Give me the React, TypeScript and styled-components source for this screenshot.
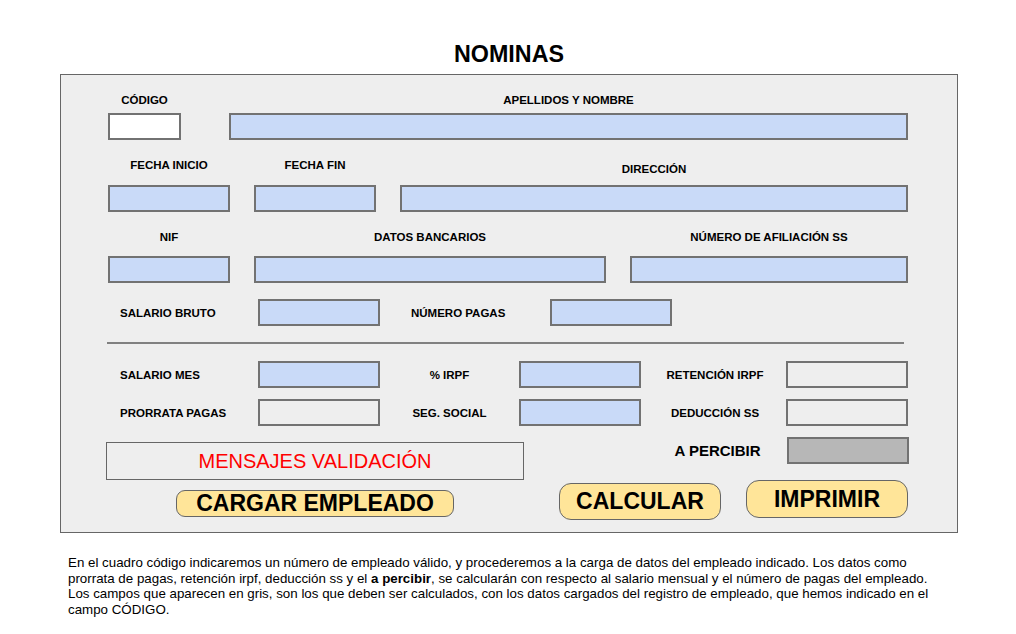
import styled, { createGlobalStyle } from "styled-components"

const GlobalStyle = createGlobalStyle`
  body {
    margin: 0;
    background: #fff;
    font-family: "Liberation Sans", Arial, sans-serif;
    color: #000;
  }
`

const Page = styled.div`
  width: 898px;
  margin-left: 60px;
  padding-top: 40px;
`

const Title = styled.h1`
  margin: 0 0 6px 0;
  font-size: 23.3px;
  line-height: 28px;
  font-weight: 700;
  text-align: center;
`

const Panel = styled.div`
  background: #eeeeee;
  border: 1px solid #666;
  padding: 0 0 12px 46px;
  box-sizing: border-box;
`

const StackRow = styled.div<{ $top: number }>`
  display: flex;
  gap: 24px;
  margin-top: ${({ $top }) => $top}px;
  margin-left: 1px;
`

const Field = styled.div<{ $w: number; $gap: number; $shift?: number }>`
  width: ${({ $w }) => $w}px;
  display: flex;
  flex-direction: column;
  align-items: center;
  gap: ${({ $gap }) => $gap}px;
  & > span {
    padding-top: ${({ $shift }) => $shift || 0}px;
    margin-bottom: ${({ $shift }) => -($shift || 0)}px;
  }
`

const Label = styled.span`
  font-size: 11.5px;
  line-height: 14px;
  font-weight: 700;
  white-space: nowrap;
`

const Box = styled.div<{ $kind?: "blue" | "white" | "empty" | "gray"; $w?: number }>`
  box-sizing: border-box;
  height: 27px;
  width: ${({ $w }) => ($w ? `${$w}px` : "100%")};
  border: 2px solid #727272;
  background: ${({ $kind }) =>
    $kind === "white" ? "#ffffff" : $kind === "empty" ? "transparent" : $kind === "gray" ? "#b7b7b7" : "#c9daf8"};
`

const InlineGrid = styled.div<{ $cols: string; $top: number }>`
  display: grid;
  grid-template-columns: ${({ $cols }) => $cols};
  align-items: center;
  margin-top: ${({ $top }) => $top}px;
  margin-left: 13px;
`

const SideLabel = styled(Label)<{ $center?: boolean; $pad?: number }>`
  text-align: ${({ $center }) => ($center ? "center" : "left")};
  padding-left: ${({ $pad }) => $pad || 0}px;
`

const Divider = styled.hr`
  width: 797px;
  margin: 16px 0 0 0;
  border: none;
  border-top: 2px solid #808080;
`

const Bottom = styled.div`
  display: flex;
  justify-content: space-between;
  margin-top: 11px;
  width: 802px;
`

const LeftCol = styled.div`
  display: flex;
  flex-direction: column;
  padding-top: 5px;
  margin-left: -1px;
`

const Messages = styled.div`
  box-sizing: border-box;
  width: 418px;
  height: 38px;
  border: 1px solid #666;
  display: flex;
  align-items: center;
  justify-content: center;
  color: #ff0000;
  font-size: 20px;
`

const RightCol = styled.div`
  display: flex;
  flex-direction: column;
  align-items: flex-end;
`

const PayRow = styled.div`
  display: flex;
  align-items: center;
`

const PayLabel = styled.span`
  width: 145px;
  text-align: center;
  font-size: 15px;
  font-weight: 700;
  padding-left: 6px;
  box-sizing: border-box;
`

const ButtonRow = styled.div`
  display: flex;
  align-items: flex-start;
  gap: 25px;
  margin-top: 16px;
  margin-right: 1px;
`

const ActionButton = styled.button<{ $w: number; $h: number; $top?: number; $left?: number }>`
  box-sizing: border-box;
  width: ${({ $w }) => $w}px;
  height: ${({ $h }) => $h}px;
  margin-top: ${({ $top }) => $top || 0}px;
  margin-left: ${({ $left }) => $left || 0}px;
  background: #ffe599;
  border: 1px solid #666;
  border-radius: ${({ $h }) => Math.round($h / 3)}px;
  font-family: "Liberation Sans", Arial, sans-serif;
  font-size: 23px;
  font-weight: 700;
  color: #000;
  padding: 0;
  display: flex;
  align-items: center;
  justify-content: center;
  line-height: 1;
`

const Note = styled.p`
  margin: 22px 0 0 8px;
  font-size: 13.33px;
  line-height: 15.5px;
  width: 890px;
`

export default function App() {
  return (
    <>
      <GlobalStyle />
      <Page>
        <Title>NOMINAS</Title>
        <Panel>
          <StackRow $top={18}>
            <Field $w={73} $gap={6}>
              <Label>CÓDIGO</Label>
              <Box $kind="white" />
            </Field>
            <Field $w={679} $gap={6} style={{ marginLeft: 24 }}>
              <Label>APELLIDOS Y NOMBRE</Label>
              <Box />
            </Field>
          </StackRow>

          <StackRow $top={18}>
            <Field $w={122} $gap={13}>
              <Label>FECHA INICIO</Label>
              <Box />
            </Field>
            <Field $w={122} $gap={13}>
              <Label>FECHA FIN</Label>
              <Box />
            </Field>
            <Field $w={508} $gap={13} $shift={4}>
              <Label>DIRECCIÓN</Label>
              <Box />
            </Field>
          </StackRow>

          <StackRow $top={18}>
            <Field $w={122} $gap={12}>
              <Label>NIF</Label>
              <Box />
            </Field>
            <Field $w={352} $gap={12}>
              <Label>DATOS BANCARIOS</Label>
              <Box />
            </Field>
            <Field $w={278} $gap={12}>
              <Label>NÚMERO DE AFILIACIÓN SS</Label>
              <Box />
            </Field>
          </StackRow>

          <InlineGrid $cols="138px 122px 170px 122px" $top={16}>
            <SideLabel>SALARIO BRUTO</SideLabel>
            <Box />
            <SideLabel $pad={31}>NÚMERO PAGAS</SideLabel>
            <Box />
          </InlineGrid>

          <Divider />

          <InlineGrid $cols="138px 122px 139px 122px 145px 122px" $top={17}>
            <SideLabel>SALARIO MES</SideLabel>
            <Box />
            <SideLabel $center>% IRPF</SideLabel>
            <Box />
            <SideLabel $center $pad={3}>RETENCIÓN IRPF</SideLabel>
            <Box $kind="empty" />
          </InlineGrid>

          <InlineGrid $cols="138px 122px 139px 122px 145px 122px" $top={11}>
            <SideLabel>PRORRATA PAGAS</SideLabel>
            <Box $kind="empty" />
            <SideLabel $center>SEG. SOCIAL</SideLabel>
            <Box />
            <SideLabel $center $pad={3}>DEDUCCIÓN SS</SideLabel>
            <Box $kind="empty" />
          </InlineGrid>

          <Bottom>
            <LeftCol>
              <Messages>MENSAJES VALIDACIÓN</Messages>
              <ActionButton $w={278} $h={27} $top={10} $left={70}>
                CARGAR EMPLEADO
              </ActionButton>
            </LeftCol>
            <RightCol>
              <PayRow>
                <PayLabel>A PERCIBIR</PayLabel>
                <Box $kind="gray" $w={122} />
              </PayRow>
              <ButtonRow>
                <ActionButton $w={162} $h={37} $top={3}>
                  CALCULAR
                </ActionButton>
                <ActionButton $w={162} $h={38}>
                  IMPRIMIR
                </ActionButton>
              </ButtonRow>
            </RightCol>
          </Bottom>
        </Panel>
        <Note>
          En el cuadro código indicaremos un número de empleado válido, y procederemos a la carga de datos del empleado indicado. Los datos como
          <br />
          prorrata de pagas, retención irpf, deducción ss y el <b>a percibir</b>, se calcularán con respecto al salario mensual y el número de pagas del empleado.
          <br />
          Los campos que aparecen en gris, son los que deben ser calculados, con los datos cargados del registro de empleado, que hemos indicado en el
          <br />
          campo CÓDIGO.
        </Note>
      </Page>
    </>
  )
}
